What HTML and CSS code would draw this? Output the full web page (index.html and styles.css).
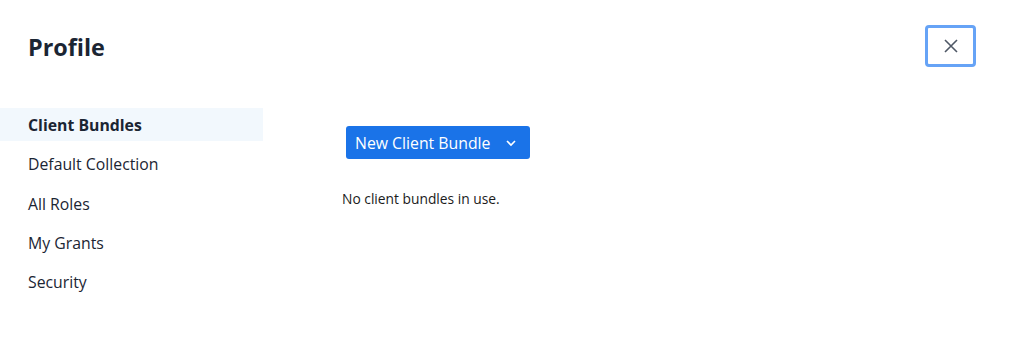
FILE: index.html
```html
<!DOCTYPE html>
<html lang="en">
<head>
    <meta charset="UTF-8">
    <title>Profile</title>
    <link rel="stylesheet" href="styles.css">
</head>
<body>
    <div class="header">
        <h1 class="title">Profile</h1>
        <button class="close-btn" aria-label="Close">
            <svg width="14" height="14" viewBox="0 0 14 14">
                <path d="M1 1 L13 13 M13 1 L1 13" stroke="#4f5866" stroke-width="1.6" fill="none"/>
            </svg>
        </button>
    </div>
    <div class="layout">
        <ul class="side-nav">
            <li class="nav-item active">Client Bundles</li>
            <li class="nav-item">Default Collection</li>
            <li class="nav-item">All Roles</li>
            <li class="nav-item">My Grants</li>
            <li class="nav-item">Security</li>
        </ul>
        <div class="content">
            <button class="primary-btn">
                <span>New Client Bundle</span>
                <svg width="12" height="8" viewBox="0 0 12 8">
                    <path d="M2 2 L6 6 L10 2" stroke="#fff" stroke-width="1.6" fill="none"/>
                </svg>
            </button>
            <p class="empty">No client bundles in use.</p>
        </div>
    </div>
</body>
</html>
```

FILE: styles.css
```css
body {
    margin: 0;
    font-family: "Open Sans", sans-serif;
    color: #1b2533;
    background: #fff;
}
.header {
    display: flex;
    justify-content: space-between;
    align-items: flex-start;
    padding: 25px 48px 0 28px;
}
.title {
    margin: 7px 0 0;
    font-size: 23.4px;
    font-weight: 700;
    line-height: 30px;
}
.close-btn {
    width: 51px;
    height: 42px;
    border: 3px solid #66a3f6;
    border-radius: 4px;
    background: #fff;
    display: flex;
    align-items: center;
    justify-content: center;
    padding: 0;
    cursor: pointer;
}
.layout {
    display: flex;
    margin-top: 41px;
}
.side-nav {
    list-style: none;
    margin: 0;
    padding: 0;
    width: 263px;
}
.nav-item {
    height: 33px;
    line-height: 35px;
    padding-left: 28px;
    margin-bottom: 6.3px;
    font-size: 15.8px;
    color: #1b2533;
}
.nav-item.active {
    font-weight: 700;
    background: #f2f8fd;
}
.content {
    padding: 18px 0 0 79px;
}
.primary-btn {
    display: flex;
    align-items: center;
    gap: 15px;
    height: 33px;
    padding: 0 13px 0 9px;
    margin-left: 4px;
    background: #1a73e8;
    color: #fff;
    border: none;
    border-radius: 3px;
    font-family: "Open Sans", sans-serif;
    font-size: 15.8px;
    cursor: pointer;
}
.empty {
    margin: 30px 0 0;
    font-size: 13.8px;
    color: #1b1b1b;
}
```
